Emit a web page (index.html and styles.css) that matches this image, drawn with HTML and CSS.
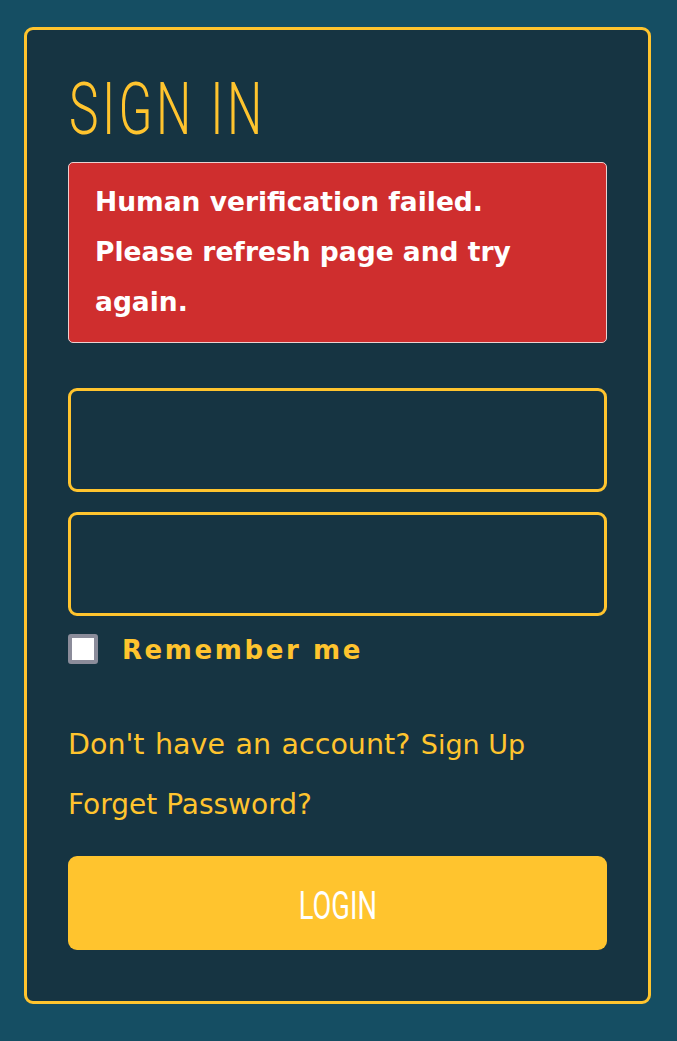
FILE: index.html
```html
<!DOCTYPE html>
<html lang="en">
<head>
<meta charset="utf-8">
<title>Sign In</title>
<link rel="stylesheet" href="styles.css">
</head>
<body>
<div class="card">
  <h1 class="title"><span class="title-text">SIGN IN</span></h1>
  <div class="alert">Human verification failed. Please refresh page and try again.</div>
  <form class="form">
    <input class="field" type="text" aria-label="Username">
    <input class="field" type="password" aria-label="Password">
    <label class="remember"><input class="check" type="checkbox"><span class="remember-text">Remember me</span></label>
    <div class="links">
      <p class="line-a">Don't have an account? <a class="signup" href="#">Sign Up</a></p>
      <p class="line-b"><a class="forget" href="#">Forget Password?</a></p>
    </div>
    <button class="login" type="button"><span class="login-text">LOGIN</span></button>
  </form>
</div>
</body>
</html>
```
FILE: styles.css
```css
html, body {
  margin: 0;
  padding: 0;
}
body {
  background: #154e63;
  font-family: "DejaVu Sans", Verdana, sans-serif;
  color: #ffc42e;
  padding: 27px 26px 37px 24px;
}
.card {
  width: 627px;
  height: 977px;
  box-sizing: border-box;
  background: #163442;
  border: 3px solid #ffc42e;
  border-radius: 9px;
  padding: 44px 41px 0 41px;
}
.title {
  margin: 0 0 16px 0;
  height: 72px;
  font-family: Roboto, "DejaVu Sans", sans-serif;
  font-weight: 300;
  font-size: 72px;
  line-height: 72px;
  color: #ffc42e;
  white-space: nowrap;
}
.title-text {
  display: inline-block;
  transform: scaleX(0.69);
  transform-origin: left center;
  letter-spacing: 5px;
  margin-left: 1px;
}
.alert {
  box-sizing: border-box;
  height: 181px;
  background: #cf2e2e;
  border: 1px solid #ecd0d0;
  border-radius: 5px;
  padding: 14px 40px 0 26px;
  color: #fff;
  font-weight: bold;
  font-size: 26.5px;
  line-height: 50px;
}
.form {
  margin: 45px 0 0 0;
  display: flex;
  flex-direction: column;
}
.field {
  box-sizing: border-box;
  height: 104px;
  width: 100%;
  margin: 0 0 20px 0;
  background: transparent;
  border: 3px solid #ffc42e;
  border-radius: 9px;
  outline: none;
}
.field + .field {
  margin-bottom: 0;
}
.remember {
  margin-top: 18px;
  display: flex;
  align-items: center;
  height: 30px;
}
.check {
  appearance: none;
  -webkit-appearance: none;
  margin: 0 24px 0 0;
  width: 30px;
  height: 30px;
  box-sizing: border-box;
  background: #fff;
  border: 4px solid #8b8c9a;
  border-radius: 3px;
}
.remember-text {
  font-weight: bold;
  font-size: 26px;
  line-height: 30px;
  letter-spacing: 2.6px;
  color: #ffc42e;
  position: relative;
  top: 1px;
}
.links {
  margin-top: 61px;
  display: flex;
  flex-direction: column;
  gap: 20px;
}
.links p {
  margin: 0;
  line-height: 40px;
  height: 40px;
}
.line-a {
  font-size: 28.5px;
  word-spacing: 1.5px;
}
.signup {
  font-size: 27px;
  color: #ffc42e;
  text-decoration: none;
  word-spacing: 0;
}
.line-b {
  font-size: 28px;
}
.forget {
  color: #ffc42e;
  text-decoration: none;
}
.login {
  margin-top: 31px;
  height: 94px;
  width: 100%;
  border: none;
  border-radius: 9px;
  background: #ffc42e;
  color: #fff;
  display: flex;
  align-items: center;
  justify-content: center;
  padding: 0;
  font-family: Roboto, "DejaVu Sans", sans-serif;
  font-size: 39px;
  font-weight: 400;
}
.login-text {
  display: inline-block;
  transform: scaleX(0.7);
  position: relative;
  top: 3px;
}
```
